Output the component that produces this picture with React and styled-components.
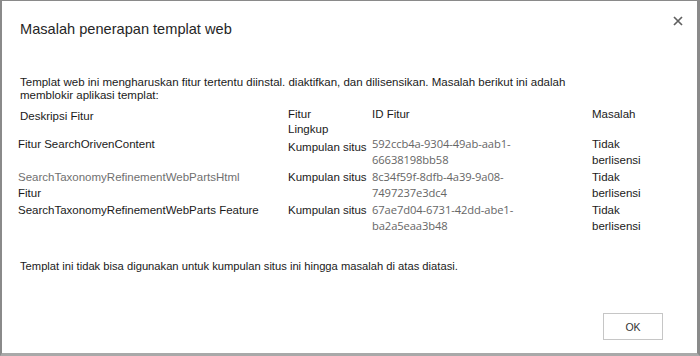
import React from "react";
import styled, { createGlobalStyle } from "styled-components";

const Global = createGlobalStyle`
  html, body { margin: 0; padding: 0; background: #fff; }
  body { font-family: "Liberation Sans", Arial, sans-serif; }
  * { box-sizing: border-box; }
`;

const Dialog = styled.div`
  position: relative;
  width: 700px;
  height: 356px;
  background: #fff;
  border-style: solid;
  border-color: #8a8a8a;
  border-width: 1px 3px 3px 2px;
  border-bottom-color: #a9a9a9;
  padding: 17px 0 0 16px;
  display: flex;
  flex-direction: column;
  color: #222;
`;

const Title = styled.h1`
  margin: 0 0 0 2px;
  font-weight: normal;
  font-size: 14.6px;
  line-height: 22px;
  color: #262626;
`;

const Close = styled.button`
  position: absolute;
  top: 12px;
  right: 11px;
  width: 16px;
  height: 16px;
  padding: 0;
  border: 0;
  background: transparent;
  display: flex;
  align-items: center;
  justify-content: center;
  cursor: pointer;
`;

const Para = styled.p`
  margin: ${(p) => p.$mt || 0}px 0 0 2px;
  font-size: ${(p) => p.$fs || 11.5}px;
  line-height: 13px;
  color: #1a1a1a;
  width: ${(p) => p.$w || 560}px;
`;

const Table = styled.div`
  margin-top: ${(p) => p.$mt}px;
  display: grid;
  grid-template-columns: 270px 84px 220px 90px;
  font-size: 11.5px;
  color: #1a1a1a;
`;

const Head = styled.div`
  line-height: 15px;
  padding-top: ${(p) => p.$pt || 0}px;
  height: 29px;
  padding-left: ${(p) => p.$pl || 0}px;
`;

const Cell = styled.div`
  line-height: 16px;
  height: ${(p) => p.$h}px;
  padding-top: ${(p) => p.$pt || 0}px;
  white-space: nowrap;
  color: #1a1a1a;
`;

const Id = styled(Cell)`
  font-family: "Open Sans", "Noto Sans", sans-serif;
  font-size: 11.2px;
  color: #666;
  letter-spacing: -0.1px;
`;

const Gray = styled.span`
  color: #707070;
`;

const Footer = styled.div`
  margin-top: auto;
  display: flex;
  justify-content: flex-end;
  padding: 0 34px 13px 0;
`;

const Ok = styled.button`
  width: 60px;
  height: 27px;
  background: #fff;
  border: 1px solid #c6c6c6;
  font-family: "Liberation Sans", Arial, sans-serif;
  font-size: 10.5px;
  color: #333;
  padding: 0;
`;

const rows = [
  {
    desc: <>Fitur SearchOrivenContent</>,
    scope: "Kumpulan situs",
    scopePt: 3,
    id: ["592ccb4a-9304-49ab-aab1-", "66638198bb58"],
    h: 33,
  },
  {
    desc: (
      <>
        <Gray>SearchTaxonomyRefinementWebPartsHtml</Gray>
        <br />
        Fitur
      </>
    ),
    scope: "Kumpulan situs",
    scopePt: 0,
    id: ["8c34f59f-8dfb-4a39-9a08-", "7497237e3dc4"],
    h: 33,
  },
  {
    desc: <>SearchTaxonomyRefinementWebParts Feature</>,
    scope: "Kumpulan situs",
    scopePt: 0,
    id: ["67ae7d04-6731-42dd-abe1-", "ba2a5eaa3b48"],
    h: 32,
  },
];

export default function App() {
  return (
    <>
      <Global />
      <Dialog>
        <Title>Masalah penerapan templat web</Title>
        <Close aria-label="Tutup">
          <svg width="10" height="10" viewBox="0 0 10 10">
            <path d="M1 1L9 9M9 1L1 9" stroke="#606060" strokeWidth="1.7" />
          </svg>
        </Close>
        <Para $mt={36}>
          Templat web ini mengharuskan fitur tertentu diinstal. diaktifkan, dan dilisensikan. Masalah berikut ini adalah
          memblokir aplikasi templat:
        </Para>
        <Table $mt={5}>
          <Head $pt={2} $pl={2}>Deskripsi Fitur</Head>
          <Head>
            Fitur
            <br />
            Lingkup
          </Head>
          <Head>ID Fitur</Head>
          <Head>Masalah</Head>
          {rows.map((r, i) => (
            <React.Fragment key={i}>
              <Cell $h={r.h}>{r.desc}</Cell>
              <Cell $h={r.h} $pt={r.scopePt}>{r.scope}</Cell>
              <Id $h={r.h}>
                {r.id[0]}
                <br />
                {r.id[1]}
              </Id>
              <Cell $h={r.h}>
                Tidak
                <br />
                berlisensi
              </Cell>
            </React.Fragment>
          ))}
        </Table>
        <Para $mt={26} $w={600} $fs={11.2}>
          Templat ini tidak bisa digunakan untuk kumpulan situs ini hingga masalah di atas diatasi.
        </Para>
        <Footer>
          <Ok>OK</Ok>
        </Footer>
      </Dialog>
    </>
  );
}
